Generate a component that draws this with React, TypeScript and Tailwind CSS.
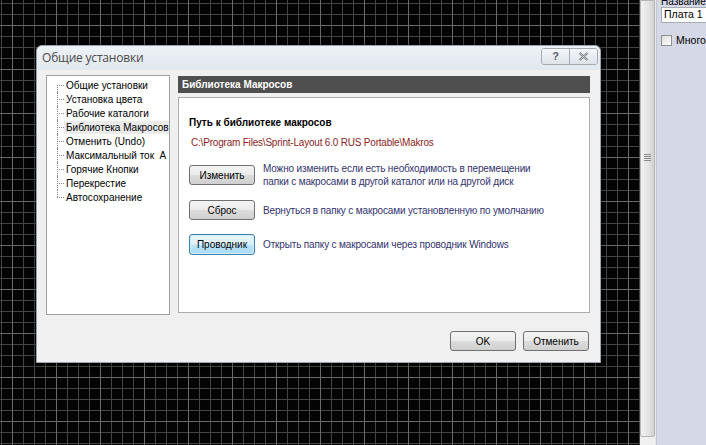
import React from "react";

const treeItems = [
  "Общие установки",
  "Установка цвета",
  "Рабочие каталоги",
  "Библиотека Макросов",
  "Отменить (Undo)",
  "Максимальный ток  А",
  "Горячие Кнопки",
  "Перекрестие",
  "Автосохранение",
];

const btn =
  "w-[66px] h-[20px] shrink-0 rounded-[3px] border border-[#707070] bg-[linear-gradient(to_bottom,#f4f4f4_0%,#ebebeb_50%,#dddddd_51%,#cfcfcf_100%)] text-[10px] text-black flex items-center justify-center";

function ActionRow({ label, focused, className, children }: any) {
  return (
    <div className={"flex items-center gap-[8px] " + (className || "")}>
      <div
        className={
          focused
            ? "w-[66px] h-[21px] shrink-0 rounded-[3px] border border-[#3c7fb1] bg-[linear-gradient(to_bottom,#eaf6fd_0%,#d9f0fc_50%,#bee6fd_51%,#a7d9f5_100%)] text-[10px] text-black flex items-center justify-center shadow-[inset_0_0_0_1px_#d6effc]"
            : btn
        }
      >
        {label}
      </div>
      <div className="text-[10px] leading-[13px] text-[#33336e] whitespace-nowrap tracking-[-0.15px]">{children}</div>
    </div>
  );
}

export default function App() {
  return (
    <div className="w-[706px] h-[445px] flex overflow-hidden font-['Liberation_Sans',Arial,sans-serif]">
      {/* canvas */}
      <div className="relative w-[640px] shrink-0 h-full bg-[#040404] bg-[linear-gradient(to_right,#6a6a6a_1px,transparent_1px),linear-gradient(to_bottom,#6a6a6a_1px,transparent_1px),linear-gradient(to_right,#454545_1px,transparent_1px),linear-gradient(to_bottom,#454545_1px,transparent_1px)] bg-[size:44px_44px,44px_44px,11px_11px,11px_11px] bg-[position:12px_25px,12px_25px,1px_3px,1px_3px]">
        {/* dialog */}
        <div className="absolute left-[36px] top-[45px] w-[565px] h-[318px] rounded-t-[6px] border border-[#9aa3ad] bg-[#f0f0f0] shadow-[0_0_6px_rgba(0,0,0,0.5)] flex flex-col">
          {/* title bar */}
          <div className="h-[24px] shrink-0 rounded-t-[6px] bg-[linear-gradient(to_bottom,#edf2f7,#e2e8ef)] flex items-center justify-between pl-[5px] pr-[2px]">
            <span className="text-[12px] text-[#4a4a4a] font-['Open_Sans',sans-serif] tracking-[-0.2px] mt-[-1px]">Общие установки</span>
            <div className="flex self-start mt-[2px] rounded-[3px] border border-[#a4aab3] overflow-hidden">
              <div className="w-[28px] h-[15px] bg-[linear-gradient(to_bottom,#f5f7fa,#dde3ea)] border-r border-[#a4aab3] flex items-center justify-center text-[11px] font-bold text-[#5a5f66] leading-none">
                ?
              </div>
              <div className="w-[27px] h-[15px] bg-[linear-gradient(to_bottom,#f5f7fa,#dde3ea)] flex items-center justify-center">
                <svg width="11" height="9" viewBox="0 0 11 9">
                  <path d="M1.5 1 L9.5 8 M9.5 1 L1.5 8" stroke="#6b7078" strokeWidth="2.2" />
                  <path d="M1.5 1 L9.5 8 M9.5 1 L1.5 8" stroke="#eef1f4" strokeWidth="0.8" />
                </svg>
              </div>
            </div>
          </div>

          {/* body */}
          <div className="flex gap-[8px] pl-[9px] pt-[5px]">
            {/* tree */}
            <div className="w-[124px] h-[240px] shrink-0 bg-white border border-[#a0a0a0] pt-[2px] pl-[10px] overflow-hidden">
              {treeItems.map((t, i) => (
                <div key={t} className="relative h-[14px] flex items-center whitespace-pre">
                  <span
                    className={
                      i === treeItems.length - 1
                        ? "absolute left-0 top-0 h-[7px] border-l border-dotted border-[#8a8a8a]"
                        : i === 0
                        ? "absolute left-0 top-[7px] h-[7px] border-l border-dotted border-[#8a8a8a]"
                        : "absolute left-0 top-0 h-[14px] border-l border-dotted border-[#8a8a8a]"
                    }
                  />
                  <span className="w-[7px] shrink-0 border-t border-dotted border-[#8a8a8a]" />
                  <span
                    className={
                      i === 3
                        ? "pl-[2px] pr-[2px] text-[10px] leading-[13px] text-black bg-[#ebebeb]"
                        : "pl-[2px] text-[10px] leading-[13px] text-black"
                    }
                  >
                    {t}
                  </span>
                </div>
              ))}
            </div>

            {/* right column */}
            <div className="w-[412px] flex flex-col">
              <div className="h-[17px] mt-[1px] bg-[#4f4f4f] text-white text-[10px] font-bold flex items-center pl-[4px]">
                Библиотека Макросов
              </div>
              <div className="mt-[4px] h-[216px] bg-white border border-[#acacac] pl-[10px] pt-[18px]">
                <div className="text-[10px] font-bold text-black leading-[13px]">Путь к библиотеке макросов</div>
                <div className="mt-[7px] pl-[2px] text-[10px] leading-[13px] text-[#8c2424] tracking-[-0.2px]">
                  C:\Program Files\Sprint-Layout 6.0 RUS Portable\Makros
                </div>
                <div className="mt-[13px] flex flex-col">
                  <ActionRow label="Изменить">
                    Можно изменить если есть необходимость в перемещении
                    <br />
                    папки с макросами в другой каталог или на другой диск
                  </ActionRow>
                  <ActionRow label="Сброс" className="mt-[12px]">
                    Вернуться в папку с макросами установленную по умолчанию
                  </ActionRow>
                  <ActionRow label="Проводник" focused className="mt-[14px]">
                    Открыть папку с макросами через проводник Windows
                  </ActionRow>
                </div>
              </div>
            </div>
          </div>

          {/* footer */}
          <div className="mt-[16px] flex justify-end gap-[7px] pr-[11px]">
            <div className={btn + " w-[64px]"}>OK</div>
            <div className={btn + " w-[63px]"}>Отменить</div>
          </div>
        </div>
      </div>

      {/* scrollbar */}
      <div className="w-[15px] shrink-0 h-full bg-[#f0f0f0] flex flex-col">
        <div className="h-[437px] border border-[#b5b5b5] rounded-b-[2px] bg-[linear-gradient(to_right,#f3f3f3,#e2e2e2_60%,#d0d0d0)] flex flex-col items-center pt-[153px]">
          <div className="w-[7px] h-[1px] bg-[#8c8c8c]" />
          <div className="w-[7px] h-[1px] mt-[1px] bg-[#8c8c8c]" />
          <div className="w-[7px] h-[1px] mt-[1px] bg-[#8c8c8c]" />
          <div className="w-[7px] h-[1px] mt-[1px] bg-[#8c8c8c]" />
        </div>
      </div>
      <div className="w-[2px] shrink-0 h-full bg-[#e6e7ea] border-r border-[#c4c7d0]" />

      {/* side panel */}
      <div className="flex-1 min-w-0 h-full bg-[#d4d8e7] pl-[4px] overflow-hidden">
        <div className="text-[10px] leading-[6px] h-[6px] overflow-hidden text-black mt-[-1px] whitespace-nowrap">Название платы</div>
        <div className="mt-[2px] h-[16px] bg-white border border-r-0 border-[#a5acb5] pl-[2px] text-[10.5px] text-black flex items-center whitespace-nowrap overflow-hidden">
          Плата 1
        </div>
        <div className="mt-[10px] flex items-center gap-[4px] whitespace-nowrap">
          <div className="w-[11px] h-[11px] shrink-0 border border-[#8e8f8f] bg-[linear-gradient(135deg,#dcdcdc,#ffffff)]" />
          <span className="text-[10.5px] text-black">Многослойная</span>
        </div>
      </div>
    </div>
  );
}
